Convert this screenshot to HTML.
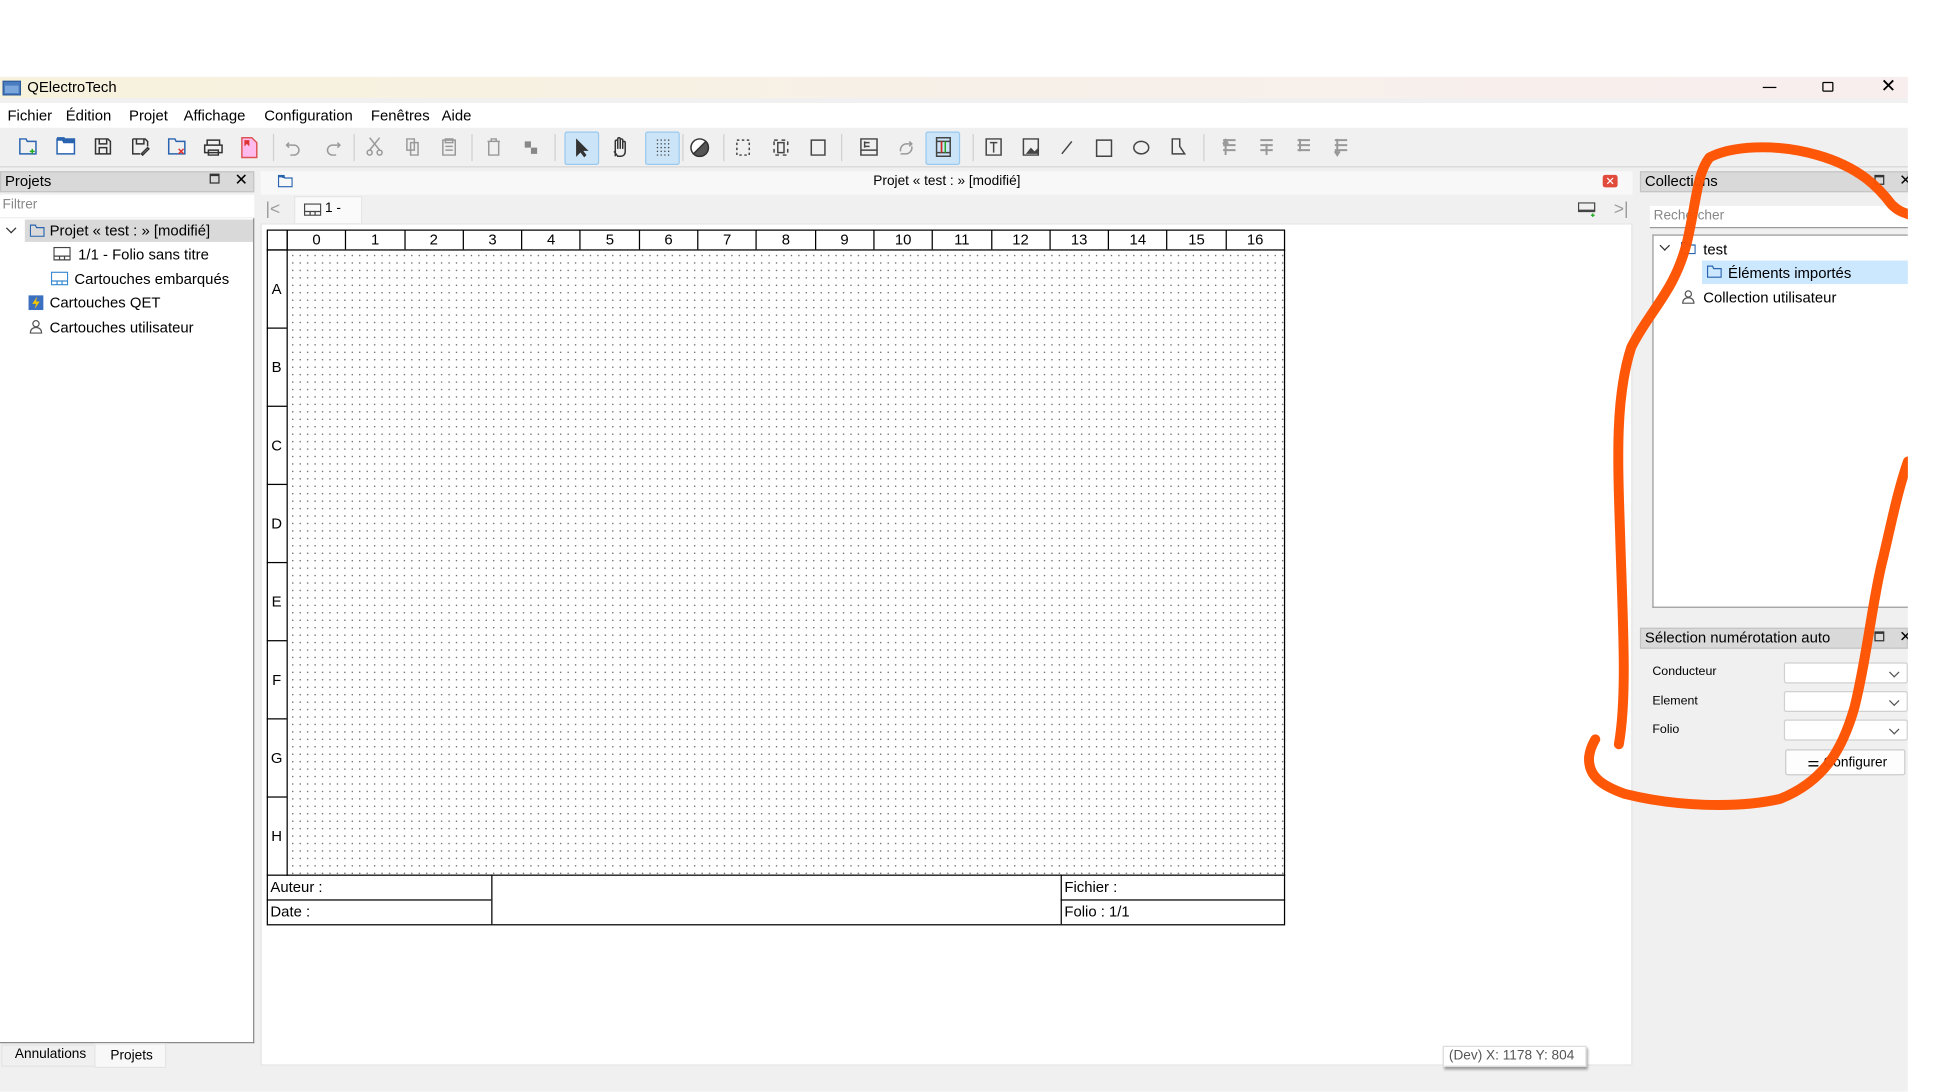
<!DOCTYPE html>
<html><head><meta charset="utf-8"><style>
*{box-sizing:border-box;margin:0;padding:0}
html,body{width:1945px;height:1092px;overflow:hidden;background:#fff;font-family:"Liberation Sans","DejaVu Sans",sans-serif;}
#w{position:absolute;left:0;top:0;width:1568px;height:880px;transform:scale(1.2405);transform-origin:0 0;font-size:12px;color:#000}
.a{position:absolute}
.win{left:0;top:62px;width:1538px;height:818px;background:#f0f0f0}
.title{left:0;top:62px;width:1538px;height:17px;background:linear-gradient(90deg,#f7f2dc,#f7f0ea 60%,#f8eeee)}
.menu{left:0;top:83px;width:1538px;height:20px;background:#fff}
.menu span{position:absolute;top:3px;font-size:12px}
.tb{left:0;top:104px;width:1538px;height:31px;background:#f0f0f0;border-bottom:1px solid #d6d6d6}
.act{position:absolute;top:106px;width:28px;height:27px;background:#cce4f7;border:1px solid #99c9ef;border-radius:2px}
.sep{position:absolute;top:108px;width:1px;height:22px;background:#d0d0d0}
.dh{background:#d9d9d9;border:1px solid #c4c4c4;height:17px;font-size:12px;padding-left:3px;line-height:15px}
.row{position:absolute;font-size:12px;white-space:nowrap}
.grid{left:231px;top:201px;width:804px;height:504px;background-image:radial-gradient(circle,#666 0.45px,transparent 0.7px);background-size:6px 6px;background-position:2px 2px;background-color:#fff}
.col{position:absolute;top:185px;height:16px;border-left:1px solid #000;text-align:center;font-size:12px;line-height:16px}
.rl{position:absolute;left:215px;width:16px;border-top:1px solid #000;text-align:center;font-size:12px}
.tbk{position:absolute;font-size:12px;line-height:19px;padding-left:3px}
.cb{position:absolute;left:1438px;width:100px;height:17px;background:#fff;border:1px solid #d0d0d0;border-radius:2px}
.cb:after{content:"";position:absolute;right:7px;top:4px;width:5px;height:5px;border-right:1px solid #555;border-bottom:1px solid #555;transform:rotate(45deg)}
</style></head><body><div id="w">
<div class="a win"></div>
<div class="a title"></div>
<svg class="a" style="left:2px;top:64px" width="15" height="13"><rect x="0.5" y="1.5" width="14" height="11" fill="#4a7cc0" stroke="#2c5a9a"/><rect x="2" y="5" width="11" height="6" fill="#7aa6dc"/></svg>
<div class="a" style="left:22px;top:63px;font-size:12px">QElectroTech</div>
<div class="a" style="left:1421px;top:70px;width:11px;height:1px;background:#000"></div>
<div class="a" style="left:1469px;top:66px;width:9px;height:8px;border:1px solid #000;border-radius:1px"></div>
<div class="a" style="left:1516px;top:63px;font-size:15px;line-height:14px">✕</div>
<div class="a menu"><span style="left:6px">Fichier</span><span style="left:53px">Édition</span><span style="left:104px">Projet</span><span style="left:148px">Affichage</span><span style="left:213px">Configuration</span><span style="left:299px">Fenêtres</span><span style="left:356px">Aide</span></div>
<div class="a tb"></div>
<div class="act" style="left:455px"></div><div class="act" style="left:520px"></div><div class="act" style="left:746px"></div>
<div class="sep" style="left:220px"></div><div class="sep" style="left:285px"></div><div class="sep" style="left:380px"></div><div class="sep" style="left:447px"></div><div class="sep" style="left:550px"></div><div class="sep" style="left:583px"></div><div class="sep" style="left:678px"></div><div class="sep" style="left:784px"></div><div class="sep" style="left:970px"></div>
<svg class="a" style="left:0;top:104px" width="1100" height="31" fill="none" stroke-width="1.2">
<g stroke="#2a64b0"><path d="M16 8h5l1 2h7v10H16z"/><path d="M46 8h14v12H46z" fill="#fff"/><path d="M46 8h5l1 2h8" stroke-width="3"/><path d="M136 8h5l1 2h7v10h-13z"/></g>
<path d="M24 18h4M26 16v4" stroke="#2a2"/><path d="M144 16l4 4M148 16l-4 4" stroke="#d33"/>
<g stroke="#333"><path d="M77 8h10l2 2v10H77z M80 8v4h6V8 M80 20v-5h6v5"/><path d="M107 8h10l2 2v4 M107 8v12h6 M110 8v4h6V8"/><path d="M114 20l5-5 1 1-5 5z"/><path d="M167 9h10v4h-10z M165 13h14v6h-14z M168 17h8v4h-8z"/></g>
<path d="M195 7h8l4 4v12h-12z" stroke="#d55" fill="#fbe"/><path d="M197 9h4v5l-2-2-2 2z" fill="#d33" stroke="none"/>
<g stroke="#999"><path d="M233 11l-2 2 2 2M231 13h6a4 4 0 0 1 0 8h-3"/><path d="M272 11l2 2-2 2M274 13h-6a4 4 0 0 0 0 8h3"/><path d="M298 7l8 10M306 7l-8 10"/><circle cx="298" cy="19" r="2"/><circle cx="306" cy="19" r="2"/><path d="M328 8h6v9h-6z M331 11h6v10h-6z"/><path d="M357 9h10v12h-10z M359 8h6v3h-6z M359 14h6M359 17h6"/><path d="M393 10h10M396 10v-2h4v2M394 10v11h8V10"/><path d="M423 10h5v5h5v5h-5v-5h-5z" fill="#888" stroke="none"/><path d="M726 18a5 5 0 0 1 5-6h4M733 10l2 2-2 2M735 14a5 5 0 0 1-5 6h-4"/></g>
<g stroke="#333"><path d="M465 9v12l3-3 3 4 1-1-3-4h4z" fill="#333"/><path d="M496 22v-8M496 14v-4a1 1 0 0 1 2 0v6 M498 10v-2a1 1 0 0 1 2 0v8 M500 9a1 1 0 0 1 2 0v7 M502 11a1 1 0 0 1 2 0v7c0 3-2 4-4 4h-2l-3-4"/><circle cx="564" cy="15" r="7" fill="#fff"/><path d="M569 10a7 7 0 0 1-10 10z" fill="#555"/></g>
<g fill="#444"><circle cx="530" cy="9" r=".6"/><circle cx="533" cy="9" r=".6"/><circle cx="536" cy="9" r=".6"/><circle cx="539" cy="9" r=".6"/><circle cx="530" cy="12" r=".6"/><circle cx="533" cy="12" r=".6"/><circle cx="536" cy="12" r=".6"/><circle cx="539" cy="12" r=".6"/><circle cx="530" cy="15" r=".6"/><circle cx="533" cy="15" r=".6"/><circle cx="536" cy="15" r=".6"/><circle cx="539" cy="15" r=".6"/><circle cx="530" cy="18" r=".6"/><circle cx="533" cy="18" r=".6"/><circle cx="536" cy="18" r=".6"/><circle cx="539" cy="18" r=".6"/><circle cx="530" cy="21" r=".6"/><circle cx="533" cy="21" r=".6"/><circle cx="536" cy="21" r=".6"/><circle cx="539" cy="21" r=".6"/></g>
<g stroke="#444"><path d="M594 9h10v12h-10z" stroke-dasharray="2 2"/><path d="M624 9h11v12h-11z" stroke-dasharray="3 3"/><path d="M627 11h5v8h-5z"/><path d="M654 9h11v12h-11z"/><path d="M694 8h13v13h-13z M694 17h13M697 10v5M697 11h4M697 14h4" /><path d="M755 7h11v15h-11z M755 10h11M755 19h11"/><path d="M795 8h12v13h-12z M798 11h6M801 11v8"/><path d="M825 8h12v13h-12z"/><path d="M856 20l8-10"/><path d="M884 9h12v13h-12z"/><ellipse cx="920" cy="15" rx="6" ry="5"/><path d="M945 8v12h10l-4-6V8z"/></g>
<path d="M759 10v9M762 10v9" stroke="#2a2"/><path d="M759 10v9" stroke="#d22"/><path d="M827 20l4-5 3 3 3-3v5z" fill="#444"/>
<g stroke="#999" stroke-width="1.6"><path d="M986 9h10M986 13h10M986 17h10M988 8v13M986 12l2-3 2 3"/><path d="M1016 9h10M1016 13h10M1016 17h10M1021 12v9"/><path d="M1046 9h10M1046 13h10M1046 17h10M1048 8v10"/><path d="M1076 9h10M1076 13h10M1076 17h10M1078 8v13M1076 18l2 3 2-3"/></g>
</svg>
<div class="a dh" style="left:0;top:138px;width:205px">Projets</div>
<div class="a" style="left:169px;top:140px;width:8px;height:8px;border:1px solid #333;border-top-width:2px"></div>
<div class="a" style="left:189px;top:137px;font-size:13px;font-weight:bold">✕</div>
<div class="a" style="left:0;top:157px;width:205px;height:18px;background:#fff;font-size:11px;color:#888;padding:2px 2px">Filtrer</div>
<div class="a" style="left:0;top:176px;width:205px;height:665px;background:#fff;border-right:1px solid #888;border-bottom:1px solid #888"></div>
<div class="a" style="left:20px;top:177px;width:184px;height:18px;background:#d9d9d9"></div>
<div class="a" style="left:6px;top:181px;width:6px;height:6px;border-right:1px solid #333;border-bottom:1px solid #333;transform:rotate(45deg)"></div>
<svg class="a" style="left:24px;top:180px" width="12" height="11" fill="none" stroke="#2a64b0"><path d="M.5 1.5h4l1 2h6v7H.5z"/></svg>
<div class="row" style="left:40px;top:179px">Projet « test : » [modifié]</div>
<svg class="a" style="left:43px;top:199px" width="14" height="11" fill="none" stroke="#444"><path d="M.5.5h13v10H.5zM.5 7.5h13M5 7.5v3M9 7.5v3"/></svg>
<div class="row" style="left:63px;top:198px">1/1 - Folio sans titre</div>
<svg class="a" style="left:41px;top:219px" width="14" height="11" fill="none" stroke="#3a8ad0"><path d="M.5.5h13v10H.5zM.5 7.5h13M5 7.5v3M9 7.5v3"/></svg>
<div class="row" style="left:60px;top:218px">Cartouches embarqués</div>
<svg class="a" style="left:23px;top:238px" width="12" height="12"><rect width="12" height="12" fill="#3b6fc0"/><path d="M7 1L3 7h3l-1 4 4-6H6z" fill="#f5c800"/></svg>
<div class="row" style="left:40px;top:237px">Cartouches QET</div>
<svg class="a" style="left:23px;top:257px" width="12" height="12" fill="none" stroke="#555"><circle cx="6" cy="4" r="2.5"/><path d="M1.5 11.5c0-3 2-4.5 4.5-4.5s4.5 1.5 4.5 4.5z"/></svg>
<div class="row" style="left:40px;top:257px">Cartouches utilisateur</div>
<div class="a" style="left:1px;top:842px;width:92px;height:18px;background:#f0f0f0;border:1px solid #e4e4e4;font-size:11px;padding:1px 0 0 10px">Annulations</div>
<div class="a" style="left:76px;top:841px;width:58px;height:20px;background:#f8f8f8;border:1px solid #e4e4e4;font-size:11px;padding:3px 0 0 12px">Projets</div>
<div class="a" style="left:210px;top:138px;width:1106px;height:19px;background:#f8f8f8"></div>
<svg class="a" style="left:224px;top:141px" width="12" height="10" fill="none" stroke="#2a64b0"><path d="M.5.5h4l1 2h6v7H.5z"/><path d="M.5 1h4v1.5" stroke-width="2"/></svg>
<div class="a" style="left:704px;top:140px;font-size:11px">Projet « test : » [modifié]</div>
<div class="a" style="left:1292px;top:141px;width:12px;height:10px;background:#e04b3c;border-radius:2px;color:#fff;font-size:9px;line-height:10px;text-align:center">✕</div>
<div class="a" style="left:237px;top:158px;width:55px;height:22px;background:#fafafa;border:1px solid #e6e6e6;border-bottom:none"></div>
<div class="a" style="left:214px;top:160px;font-size:14px;color:#999">|&lt;</div>
<svg class="a" style="left:245px;top:164px" width="14" height="10" fill="none" stroke="#444"><path d="M.5.5h13v9H.5zM.5 6.5h13M5 6.5v3M9 6.5v3"/></svg>
<div class="a" style="left:262px;top:162px;font-size:11px">1 -</div>
<svg class="a" style="left:1272px;top:163px" width="16" height="12" fill="none" stroke="#444"><path d="M.5.5h13v7H.5zM.5 6.5h13"/><path d="M12 9v3M10.5 10.5h3" stroke="#2a2"/></svg>
<div class="a" style="left:1301px;top:160px;font-size:14px;color:#999">&gt;|</div>
<div class="a" style="left:210px;top:180px;width:1106px;height:679px;background:#fff;border:1px solid #e4e4e4"></div>
<div class="a grid"></div>
<div class="a" style="left:215px;top:185px;width:821px;height:561px;border:1px solid #000"></div>
<div class="a" style="left:215px;top:201px;width:821px;height:1px;background:#000"></div>
<div class="a" style="left:231px;top:185px;width:1px;height:521px;background:#000"></div>
<div id="cols"></div>
<div class="a" style="left:215px;top:705px;width:821px;height:1px;background:#000"></div>
<div class="a" style="left:215px;top:725px;width:181px;height:1px;background:#000"></div>
<div class="a" style="left:855px;top:725px;width:181px;height:1px;background:#000"></div>
<div class="a" style="left:396px;top:705px;width:1px;height:40px;background:#000"></div>
<div class="a" style="left:855px;top:705px;width:1px;height:40px;background:#000"></div>
<div class="tbk" style="left:215px;top:706px">Auteur :</div>
<div class="tbk" style="left:215px;top:726px">Date :</div>
<div class="tbk" style="left:855px;top:706px">Fichier :</div>
<div class="tbk" style="left:855px;top:726px">Folio : 1/1</div>
<div class="a" style="left:1163px;top:843px;width:116px;height:17px;background:#fff;border:1px solid #ddd;box-shadow:1px 2px 2px #999;font-size:11px;color:#555;padding:1px 4px">(Dev) X: 1178 Y: 804</div>
<div class="a dh" style="left:1322px;top:138px;width:216px">Collections</div>
<div class="a" style="left:1511px;top:141px;width:8px;height:8px;border:1px solid #333;border-top-width:2px"></div>
<div class="a" style="left:1531px;top:138px;font-size:12px;font-weight:bold">✕</div>
<div class="a" style="left:1330px;top:166px;width:208px;height:18px;background:#fff;border-bottom:1px solid #999;font-size:11px;color:#888;padding:2px 3px">Rechercher</div>
<div class="a" style="left:1332px;top:189px;width:206px;height:301px;background:#fff;border:1px solid #999;border-right:none"></div>
<div class="a" style="left:1339px;top:195px;width:6px;height:6px;border-right:1px solid #333;border-bottom:1px solid #333;transform:rotate(45deg)"></div>
<svg class="a" style="left:1355px;top:195px" width="12" height="10" fill="none" stroke="#2a64b0"><path d="M.5.5h4l1 2h6v7H.5z"/></svg>
<div class="row" style="left:1373px;top:194px">test</div>
<div class="a" style="left:1372px;top:210px;width:166px;height:19px;background:#cce8ff"></div>
<svg class="a" style="left:1376px;top:214px" width="12" height="10" fill="none" stroke="#2a64b0"><path d="M.5.5h4l1 2h6v7H.5z"/></svg>
<div class="row" style="left:1393px;top:213px">Éléments importés</div>
<svg class="a" style="left:1355px;top:233px" width="12" height="12" fill="none" stroke="#555"><circle cx="6" cy="4" r="2.5"/><path d="M1.5 11.5c0-3 2-4.5 4.5-4.5s4.5 1.5 4.5 4.5z"/></svg>
<div class="row" style="left:1373px;top:233px">Collection utilisateur</div>
<div class="a dh" style="left:1322px;top:506px;width:216px">Sélection numérotation auto</div>
<div class="a" style="left:1511px;top:509px;width:8px;height:8px;border:1px solid #333;border-top-width:2px"></div>
<div class="a" style="left:1531px;top:506px;font-size:12px;font-weight:bold">✕</div>
<div class="row" style="left:1332px;top:536px;font-size:10px">Conducteur</div>
<div class="row" style="left:1332px;top:560px;font-size:10px">Element</div>
<div class="row" style="left:1332px;top:583px;font-size:10px">Folio</div>
<div class="cb" style="top:534px"></div><div class="cb" style="top:557px"></div><div class="cb" style="top:580px"></div>
<div class="a" style="left:1439px;top:604px;width:97px;height:21px;background:#fdfdfd;border:1px solid #ccc;border-radius:2px;font-size:11px;padding:3px 0 0 17px">⚌ Configurer</div>
<svg class="a" style="left:0;top:0" width="1568" height="880"><path d="M1305 600 C1312 560 1308 500 1306 430 C1304 370 1302 320 1315 280 C1330 250 1350 235 1360 195 C1368 160 1368 140 1378 127 C1395 118 1430 115 1465 125 C1500 135 1515 152 1525 165 C1532 172 1538 172 1542 174 M1538 372 C1530 395 1525 420 1518 450 C1510 480 1505 530 1495 570 C1485 605 1470 630 1435 644 C1400 652 1350 650 1310 640 C1290 633 1280 625 1281 610 C1282 602 1285 598 1286 596" fill="none" stroke="#ff5200" stroke-width="8" stroke-linecap="round" stroke-linejoin="round" opacity=".97"/></svg>
<div class="a" style="left:1538px;top:0;width:30px;height:880px;background:#fff"></div>
</div>
<script>
var c=document.getElementById('cols'),h='';var x0=231,w=(1035-231)/17;
for(var i=0;i<17;i++)h+='<div class="col" style="left:'+(x0+i*w)+'px;width:'+w+'px">'+i+'</div>';
var L='ABCDEFGH',rh=504/8;for(var j=0;j<8;j++)h+='<div class="rl" style="top:'+(201+j*rh)+'px;height:'+rh+'px;line-height:'+rh+'px">'+L[j]+'</div>';
c.outerHTML=h;
</script>
</body></html>
